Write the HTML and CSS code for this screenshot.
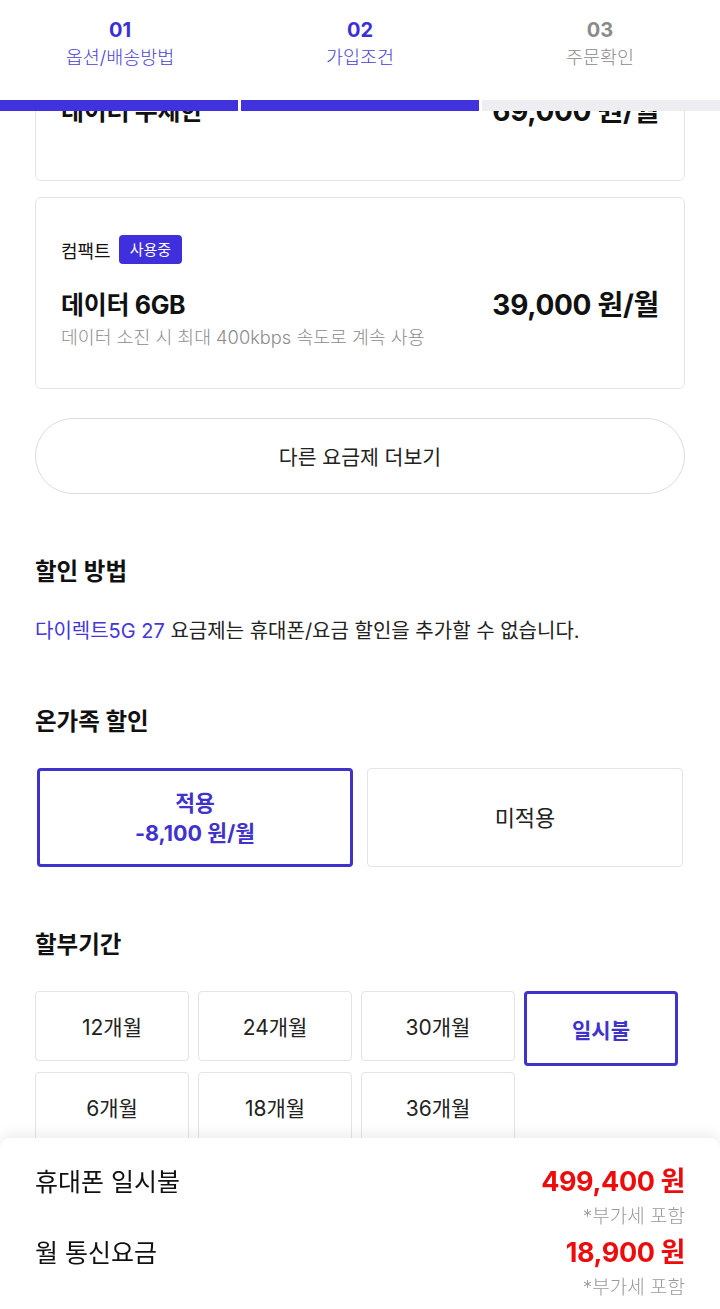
FILE: index.html
```html
<!DOCTYPE html>
<html lang="ko">
<head>
  <meta charset="UTF-8">
  <meta name="viewport" content="width=device-width, initial-scale=1.0">
  <title>가입조건</title>
  <link rel="stylesheet" href="styles.css">
</head>
<body>
  <header class="steps">
    <div class="step-list">
      <div class="step done"><span class="step-no">01</span><span class="step-name">옵션/배송방법</span></div>
      <div class="step done"><span class="step-no">02</span><span class="step-name">가입조건</span></div>
      <div class="step"><span class="step-no">03</span><span class="step-name">주문확인</span></div>
    </div>
    <div class="progress">
      <span class="bar on"></span>
      <span class="bar on"></span>
      <span class="bar"></span>
    </div>
  </header>

  <main class="content">
    <div class="plan plan-first">
      <div class="plan-tag"></div>
      <div class="plan-row">
        <strong class="plan-name">데이터 무제한</strong>
        <strong class="plan-price">69,000 원/월</strong>
      </div>
    </div>

    <div class="plan">
      <div class="plan-tag"><span>컴팩트</span><span class="badge">사용중</span></div>
      <div class="plan-row">
        <strong class="plan-name">데이터 6GB</strong>
        <strong class="plan-price">39,000 원/월</strong>
      </div>
      <p class="plan-desc">데이터 소진 시 최대 400kbps 속도로 계속 사용</p>
    </div>

    <button class="more-btn" type="button">다른 요금제 더보기</button>

    <section class="section">
      <h2>할인 방법</h2>
      <p class="notice"><span class="hl">다이렉트5G 27</span> 요금제는 휴대폰/요금 할인을 추가할 수 없습니다.</p>
    </section>

    <section class="section">
      <h2>온가족 할인</h2>
      <div class="choice-grid">
        <button class="choice selected" type="button"><span>적용</span><span>-8,100 원/월</span></button>
        <button class="choice" type="button"><span>미적용</span></button>
      </div>
    </section>

    <section class="section">
      <h2>할부기간</h2>
      <div class="month-grid">
        <button class="month" type="button">12개월</button>
        <button class="month" type="button">24개월</button>
        <button class="month" type="button">30개월</button>
        <button class="month selected" type="button">일시불</button>
        <button class="month" type="button">6개월</button>
        <button class="month" type="button">18개월</button>
        <button class="month" type="button">36개월</button>
      </div>
    </section>
  </main>

  <footer class="summary">
    <div class="sum-row">
      <span class="sum-label">휴대폰 일시불</span>
      <div class="sum-value"><strong>499,400 원</strong><small>*부가세 포함</small></div>
    </div>
    <div class="sum-row">
      <span class="sum-label">월 통신요금</span>
      <div class="sum-value"><strong>18,900 원</strong><small>*부가세 포함</small></div>
    </div>
  </footer>
</body>
</html>
```

FILE: styles.css
```css
body { margin: 0; background: #fff; color: #111; font-family: Inter, "Noto Sans CJK KR", sans-serif; }
button { font-family: inherit; background: #fff; cursor: pointer; }

.steps { position: fixed; top: 0; left: 0; right: 0; background: #fff; z-index: 10; }
.step-list { display: flex; height: 100px; padding-top: 18px; box-sizing: border-box; }
.step { flex: 1; display: flex; flex-direction: column; align-items: center; color: #8a8a8a; }
.step.done { color: #4a3fd2; }
.step-no { font-size: 20px; line-height: 24px; font-weight: 700; }
.step.done .step-no { color: #3b2fd6; }
.step-name { font-size: 18.5px; line-height: 26px; margin-top: 2px; font-weight: 300; }
.progress { display: flex; gap: 3px; height: 11px; }
.bar { flex: 1; background: #eeeef2; }
.bar.on { background: #4033dd; }

.content { padding: 0 35px 180px; }

.plan { border: 1px solid #e4e4e4; border-radius: 6px; padding: 37px 25px 39px; margin-top: 16px; }
.plan-first { margin-top: 3px; padding-bottom: 55px; }
.plan-tag { display: flex; align-items: center; gap: 8px; height: 29px; font-size: 18px; }
.badge { background: #3f2fdc; color: #fff; border-radius: 4px; font-size: 15px; line-height: 29px; padding: 0 11px; }
.plan-row { display: flex; justify-content: space-between; align-items: center; margin-top: 23px; height: 32px; }
.plan-name { font-size: 25px; letter-spacing: -0.3px; }
.plan-price { font-size: 28px; letter-spacing: -0.3px; }
.plan-desc { margin: 6px 0 0; font-size: 18.3px; line-height: 24px; color: #8c8c8c; font-weight: 300; }

.more-btn { display: block; width: 100%; height: 76px; margin-top: 29px; border: 1px solid #dcdcdc; border-radius: 38px; font-size: 20.5px; color: #222; }

.section { margin-top: 63px; }
.section h2 { margin: 0 0 31px; font-size: 23.5px; line-height: 30px; font-weight: 700; }
.notice { margin: 0; font-size: 20px; line-height: 26px; color: #222; }
.hl { color: #4436d8; }

.choice-grid { display: grid; grid-template-columns: 1fr 1fr; gap: 14px; padding: 0 2px; }
.choice { height: 99px; border: 1px solid #e4e4e4; border-radius: 4px; display: flex; flex-direction: column; align-items: center; justify-content: center; font-size: 22px; line-height: 30px; color: #222; }
.choice.selected { border: 3px solid #4033cc; color: #4033cc; font-weight: 700; font-size: 21.5px; }

.month-grid { display: grid; grid-template-columns: repeat(4, 154px); gap: 6px 9px; align-items: start; }
.month { height: 70px; border: 1px solid #e4e4e4; border-radius: 4px; font-size: 21px; color: #222; }
.month.selected { height: 75px; border: 3px solid #4033cc; color: #4033cc; font-weight: 700; }

.summary { position: fixed; left: 0; right: 0; bottom: 0; height: 171px; box-sizing: border-box; padding: 27px 35px 0; background: #fff; border-radius: 10px 10px 0 0; box-shadow: 0 -4px 14px rgba(0, 0, 0, 0.08); z-index: 10; }
.sum-row { display: flex; justify-content: space-between; align-items: flex-start; }
.sum-row + .sum-row { margin-top: 4px; }
.sum-label { font-size: 25px; line-height: 34px; }
.sum-value { display: flex; flex-direction: column; align-items: flex-end; }
.sum-value strong { font-size: 27px; line-height: 34px; color: #ee0b0b; letter-spacing: -0.4px; }
.sum-value small { font-size: 19px; line-height: 30px; padding-top: 3px; color: #999; font-weight: 300; }
```
